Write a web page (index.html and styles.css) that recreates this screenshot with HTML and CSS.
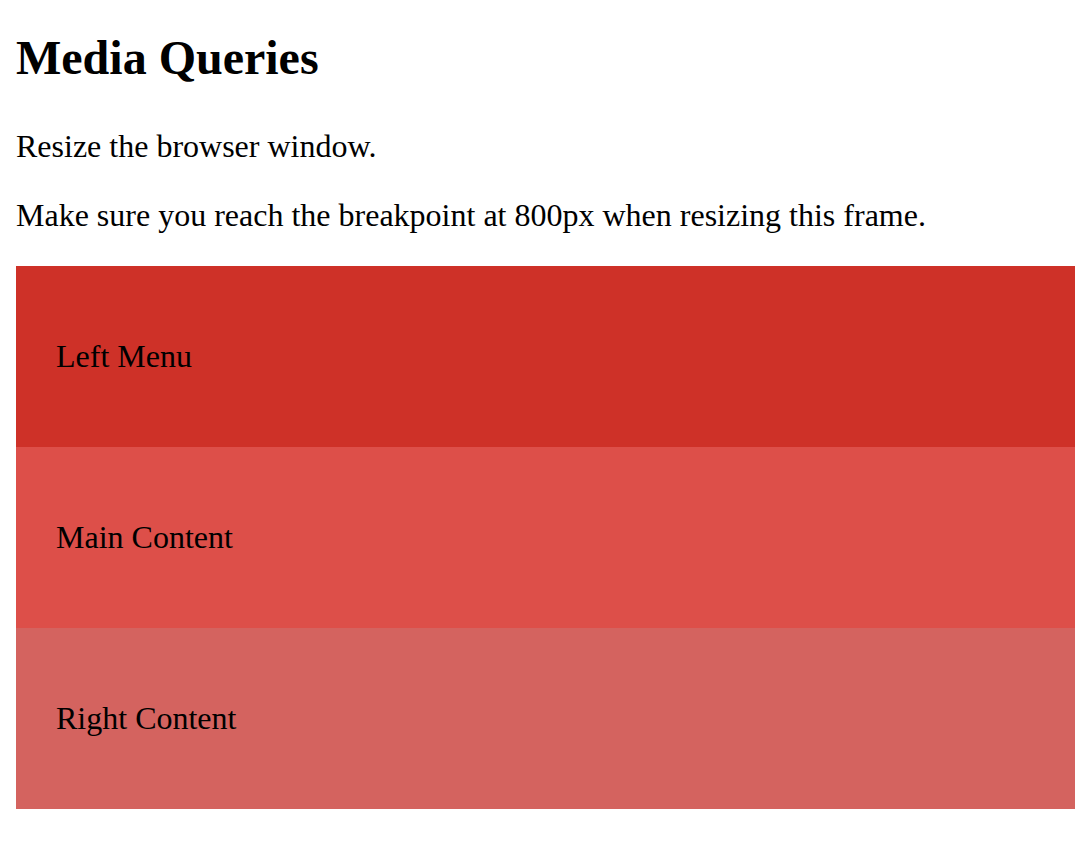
FILE: index.html
```html
<!DOCTYPE html>
<html>
<head>
<meta charset="utf-8">
<title>Media Queries</title>
<link rel="stylesheet" href="styles.css">
</head>
<body class="page">
  <h1 class="title">Media Queries</h1>
  <p class="text">Resize the browser window.</p>
  <p class="text">Make sure you reach the breakpoint at 800px when resizing this frame.</p>
  <div class="row">
    <div class="col menu"><p class="text">Left Menu</p></div>
    <div class="col main"><p class="text">Main Content</p></div>
    <div class="col right"><p class="text">Right Content</p></div>
  </div>
</body>
</html>
```
FILE: styles.css
```css
html, body {
  background: #ffffff;
}
.page {
  margin: 30px 16px 16px;
  font-family: "Liberation Serif", "Times New Roman", serif;
  color: #000000;
}
.title {
  font-size: 48px;
  font-weight: bold;
  margin: 0 0 43px;
  line-height: normal;
}
.text {
  font-size: 32px;
  margin: 32px 0;
  line-height: normal;
}
.row {
  display: flex;
  flex-direction: column;
}
.col {
  padding: 40px;
}
.menu {
  background: #ce3128;
}
.main {
  background: #dd4f49;
}
.right {
  background: #d4635f;
}
```
